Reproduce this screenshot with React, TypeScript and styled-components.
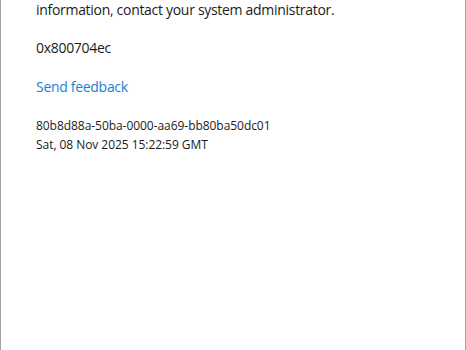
import React from "react";
import styled, { createGlobalStyle } from "styled-components";

const Global = createGlobalStyle`
  html, body { margin: 0; padding: 0; background: #ffffff; }
  body { font-family: "Open Sans", "Noto Sans", sans-serif; color: #1b1b1b; }
`;

const Frame = styled.div`
  box-sizing: border-box;
  width: 466px;
  height: 350px;
  border-left: 1px solid #a3a3a3;
  border-right: 1px solid #a3a3a3;
  padding: 0 0 0 35px;
  overflow: hidden;
  display: flex;
  flex-direction: column;
  align-items: flex-start;
`;

const Para = styled.p<{ $gap: number }>`
  margin: ${(p) => p.$gap}px 0 0 0;
  font-size: 14px;
  letter-spacing: -0.3px;
  line-height: 20px;
  white-space: nowrap;
`;

const Link = styled.a`
  color: #1a7fd4;
  text-decoration: none;
  font-size: 14px;
  letter-spacing: -0.3px;
  line-height: 20px;
  margin-top: 19px;
  cursor: pointer;
`;

const Meta = styled.div`
  margin-top: 19px;
  font-size: 12px;
  letter-spacing: -0.05px;
  line-height: 19px;
  display: flex;
  flex-direction: column;
`;

export default function App() {
  return (
    <>
      <Global />
      <Frame>
        <Para $gap={0}>information, contact your system administrator.</Para>
        <Para $gap={18}>0x800704ec</Para>
        <Link>Send feedback</Link>
        <Meta>
          <span>80b8d88a-50ba-0000-aa69-bb80ba50dc01</span>
          <span>Sat, 08 Nov 2025 15:22:59 GMT</span>
        </Meta>
      </Frame>
    </>
  );
}
